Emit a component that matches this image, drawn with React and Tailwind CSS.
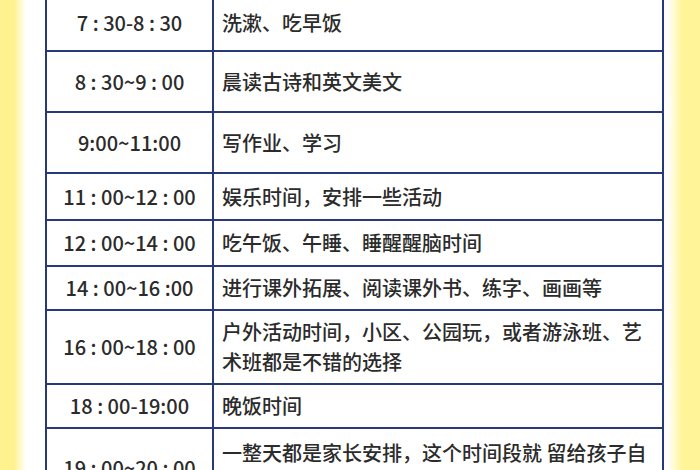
const rows = [
  { time: '7 : 30-8 : 30', text: '洗漱、吃早饭', h: 'h-[56px]' },
  { time: '8 : 30~9 : 00', text: '晨读古诗和英文美文', h: 'h-[61px]' },
  { time: '9:00~11:00', text: '写作业、学习', h: 'h-[61px]' },
  { time: '11 : 00~12 : 00', text: '娱乐时间，安排一些活动', h: 'h-[47px]' },
  { time: '12 : 00~14 : 00', text: '吃午饭、午睡、睡醒醒脑时间', h: 'h-[46px]' },
  { time: '14 : 00~16 :00', text: '进行课外拓展、阅读课外书、练字、画画等', h: 'h-[44px]' },
  { time: '16 : 00~18 : 00', text: '户外活动时间，小区、公园玩，或者游泳班、艺术班都是不错的选择', h: 'h-[74px]' },
  { time: '18 : 00-19:00', text: '晚饭时间', h: 'h-[44px]' },
  { time: '19 : 00~20 : 00', text: '一整天都是家长安排，这个时间段就 留给孩子自由安排吧', h: 'h-[80px]' },
];

export default function App() {
  return (
    <div
      className="w-[700px] h-[470px] overflow-hidden bg-[linear-gradient(to_right,#fef28e_0px,#fef28e_14px,#ffffff_26px,#ffffff_668px,#fff498_682px)]"
      style={{ fontFamily: '"Noto Sans CJK SC", "Noto Sans", sans-serif' }}
    >
      <div className="ml-[45px] mt-[-6px] w-[619px] border-x-2 border-t-2 border-[#27397a] bg-white text-[#2b2b2b] font-medium">
        {rows.map((r, i) => (
          <div key={i} className={`flex ${r.h} border-b-2 border-[#27397a]`}>
            <div className="w-[167px] shrink-0 flex items-center justify-center text-[20px] whitespace-pre border-r-2 border-[#27397a]">
              {r.time}
            </div>
            <div className="flex-1 flex items-center pl-[8px] pr-[6px] text-[20px] leading-[30px]">
              {r.text}
            </div>
          </div>
        ))}
      </div>
    </div>
  );
}
